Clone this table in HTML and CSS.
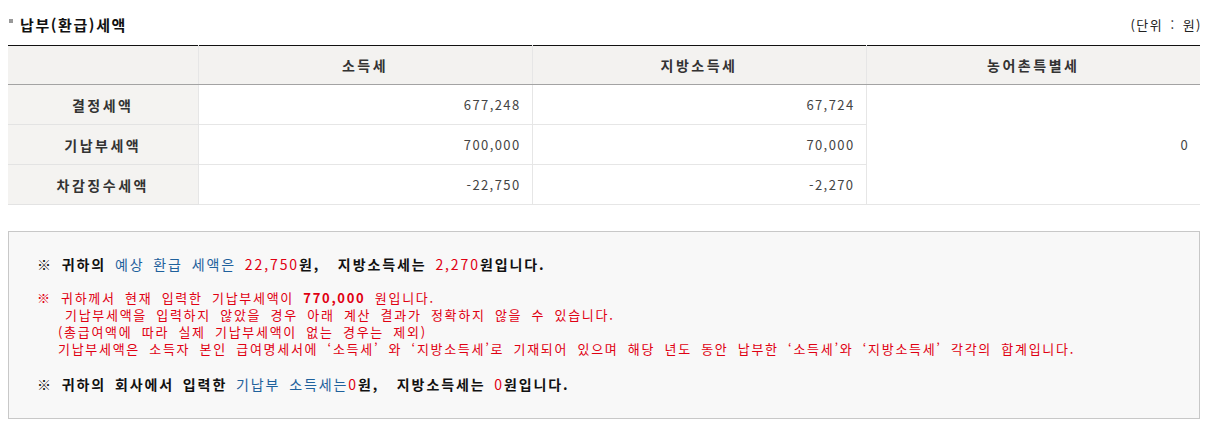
FILE: index.html
```html
<!DOCTYPE html>
<html lang="ko">
<head>
<meta charset="utf-8">
<title>납부(환급)세액</title>
<link rel="stylesheet" href="styles.css">
</head>
<body>
<div class="wrap">
  <div class="title-row">
    <h3 class="title"><span class="bullet"></span>납부(환급)세액</h3>
    <span class="unit">(단위 : 원)</span>
  </div>
  <table class="tax">
    <colgroup>
      <col class="c1"><col class="c2"><col class="c3"><col class="c4">
    </colgroup>
    <thead>
      <tr><th></th><th>소득세</th><th>지방소득세</th><th>농어촌특별세</th></tr>
    </thead>
    <tbody>
      <tr><th>결정세액</th><td>677,248</td><td>67,724</td><td rowspan="3">0</td></tr>
      <tr><th>기납부세액</th><td>700,000</td><td>70,000</td></tr>
      <tr><th>차감징수세액</th><td>-22,750</td><td>-2,270</td></tr>
    </tbody>
  </table>
  <div class="notice">
    <p class="strong">※ 귀하의 <span class="blue">예상 환급 세액은</span> <span class="red">22,750</span>원, &nbsp;지방소득세는 <span class="red">2,270</span>원입니다.</p>
    <div class="warn">
      <p>※ 귀하께서 현재 입력한 기납부세액이 <b>770,000</b> 원입니다.</p>
      <p class="ind1">기납부세액을 입력하지 않았을 경우 아래 계산 결과가 정확하지 않을 수 있습니다.</p>
      <p class="ind2">(총급여액에 따라 실제 기납부세액이 없는 경우는 제외)</p>
      <p class="ind2">기납부세액은 소득자 본인 급여명세서에 ‘소득세’ 와 ‘지방소득세’로 기재되어 있으며 해당 년도 동안 납부한 ‘소득세’와 ‘지방소득세’ 각각의 합계입니다.</p>
    </div>
    <p class="strong last">※ 귀하의 회사에서 입력한 <span class="blue">기납부 소득세는</span><span class="red">0</span>원, &nbsp;지방소득세는 <span class="red">0</span>원입니다.</p>
  </div>
</div>
</body>
</html>
```

FILE: styles.css
```css
* { box-sizing: border-box; }
html, body { margin: 0; padding: 0; background: #fff; }
body {
  font-family: "Noto Sans CJK KR", "Noto Sans", sans-serif;
  color: #333;
  font-size: 12px;
}
.wrap {
  width: 1192px;
  margin-left: 8px;
  padding-top: 12px;
}
.title-row {
  display: flex;
  justify-content: space-between;
  align-items: center;
  height: 24px;
  margin-bottom: 9px;
}
.title {
  margin: 0;
  display: flex;
  align-items: center;
  font-size: 15px;
  font-weight: bold;
  color: #111;
  letter-spacing: 1.6px;
}
.bullet {
  display: inline-block;
  width: 4px;
  height: 4px;
  background: #999;
  margin: 0 7px 0 1px;
  position: relative;
  top: -3px;
}
.unit {
  font-size: 13px;
  color: #222;
  letter-spacing: 1.5px;
  word-spacing: 2px;
  margin-right: -2px;
}
.tax {
  width: 100%;
  border-collapse: collapse;
  table-layout: fixed;
  border-top: 1px solid #111;
}
.c1 { width: 190px; }
.c2 { width: 334px; }
.c3 { width: 334px; }
.c4 { width: 334px; }
.tax thead th {
  height: 39px;
  background: #f3f2f0;
  border-bottom: 1px solid #a3a3a3;
  border-left: 1px solid #e6e6e6;
  font-size: 14px;
  font-weight: bold;
  color: #333;
  letter-spacing: 2.5px;
}
.tax thead th:first-child { border-left: none; }
.tax tbody th {
  height: 40px;
  background: #f4f3f1;
  font-size: 14px;
  font-weight: bold;
  color: #333;
  letter-spacing: 2.5px;
  border-bottom: 1px solid #e3e3e3;
}
.tax tbody td {
  height: 40px;
  text-align: right;
  padding-right: 11px;
  color: #444;
  font-size: 13px;
  border-bottom: 1px solid #e6e6e6;
  border-left: 1px solid #e6e6e6;
  letter-spacing: 1.4px;
}
.notice {
  margin-top: 26px;
  border: 1px solid #c8c8c8;
  background: #f8f8f8;
  padding: 24px 28px 25px 28px;
}
.notice p { margin: 0; line-height: 17px; white-space: nowrap; }
.strong {
  font-size: 14px;
  font-weight: bold;
  color: #111;
  letter-spacing: 1.9px;
  word-spacing: 3px;
}
.blue { color: #1f619c; font-weight: normal; }
.red { color: #e00012; font-weight: normal; }
.warn {
  margin-top: 16px;
  color: #e00012;
  font-size: 13px;
  letter-spacing: 1.7px;
  word-spacing: 4px;
}
.warn b { font-weight: bold; }
.ind1 { padding-left: 28px; }
.ind2 { padding-left: 21px; }
.last { margin-top: 19px !important; }
```
